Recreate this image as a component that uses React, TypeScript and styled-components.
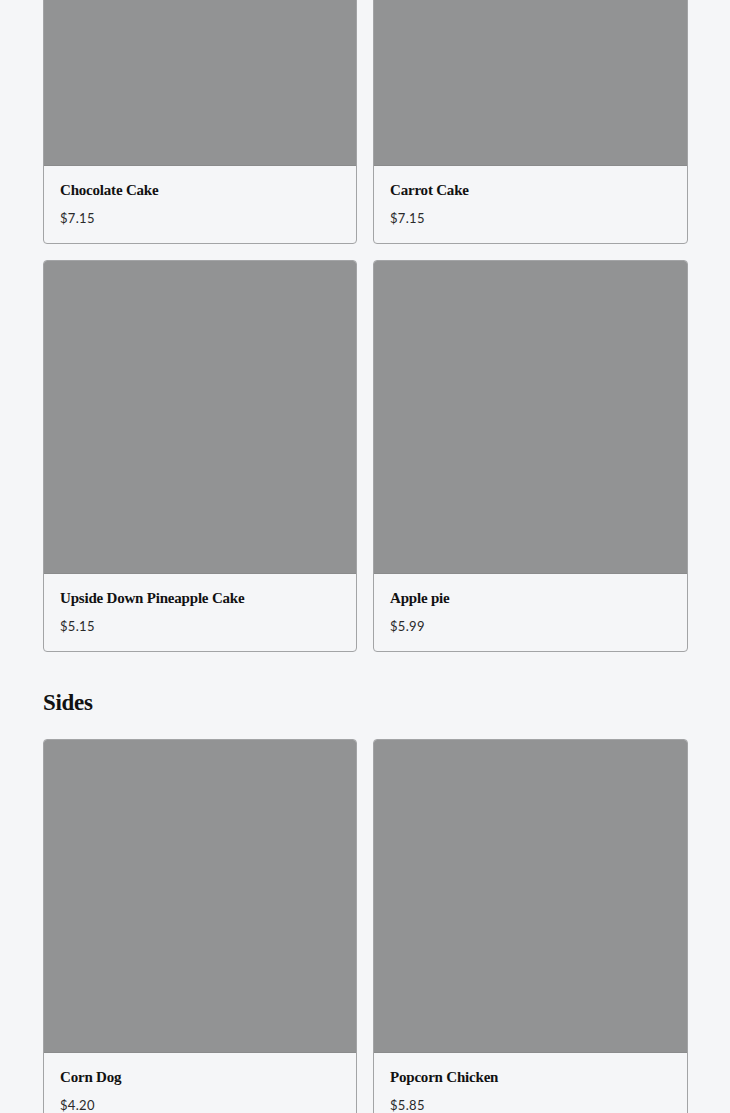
import React from "react";
import styled, { createGlobalStyle } from "styled-components";

const Global = createGlobalStyle`
  html, body { margin: 0; padding: 0; background: #f5f6f8; overflow: hidden; }
  body { font-family: "Liberation Serif", serif; color: #121212; }
`;

const Page = styled.main`
  padding: 0 42px 0 43px;
  margin-top: -148px;
`;

const Section = styled.section`
  display: flex;
  flex-direction: column;
`;

const Heading = styled.h2`
  margin: 37px 0 22px;
  font-family: "Liberation Serif", serif;
  font-weight: 700;
  font-size: 23px;
  line-height: 28px;
  letter-spacing: -0.3px;
  color: #111;
`;

const Grid = styled.div`
  display: grid;
  grid-template-columns: 314px 1fr;
  gap: 16px;
`;

const Card = styled.article`
  border: 1px solid #a3a4a6;
  border-radius: 4px;
  overflow: hidden;
  background: #f5f6f8;
  display: flex;
  flex-direction: column;
`;

const Photo = styled.div`
  height: 312px;
  background: #929394;
  border-bottom: 1px solid #8a8b8c;
`;

const Body = styled.div`
  display: flex;
  flex-direction: column;
  gap: 8px;
  padding: 14px 16px 15px;
`;

const Name = styled.h3`
  margin: 0;
  font-family: "Liberation Serif", serif;
  font-weight: 700;
  font-size: 15px;
  line-height: 20px;
  letter-spacing: -0.2px;
  color: #111;
`;

const Price = styled.span`
  font-family: Lato, "Liberation Sans", sans-serif;
  font-size: 13px;
  line-height: 20px;
  letter-spacing: 0.3px;
  color: #2a2a2a;
`;

type Item = { name: string; price: string };

const desserts: Item[] = [
  { name: "Chocolate Cake", price: "$7.15" },
  { name: "Carrot Cake", price: "$7.15" },
  { name: "Upside Down Pineapple Cake", price: "$5.15" },
  { name: "Apple pie", price: "$5.99" },
];

const sides: Item[] = [
  { name: "Corn Dog", price: "$4.20" },
  { name: "Popcorn Chicken", price: "$5.85" },
];

const MenuCard = ({ item }: { item: Item }) => (
  <Card>
    <Photo />
    <Body>
      <Name>{item.name}</Name>
      <Price>{item.price}</Price>
    </Body>
  </Card>
);

export default function App() {
  return (
    <>
      <Global />
      <Page>
        <Section>
          <Grid>
            {desserts.map((d) => (
              <MenuCard key={d.name} item={d} />
            ))}
          </Grid>
        </Section>
        <Section>
          <Heading>Sides</Heading>
          <Grid>
            {sides.map((d) => (
              <MenuCard key={d.name} item={d} />
            ))}
          </Grid>
        </Section>
      </Page>
    </>
  );
}
